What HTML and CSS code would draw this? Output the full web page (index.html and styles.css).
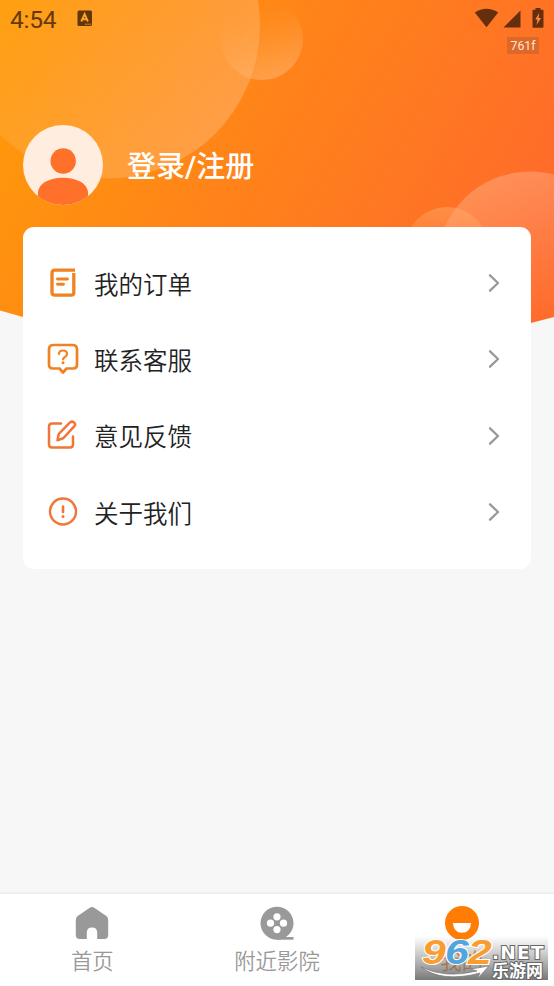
FILE: index.html
```html
<!DOCTYPE html>
<html lang="zh-CN">
<head>
<meta charset="utf-8">
<title>我的</title>
<link rel="stylesheet" href="styles.css">
</head>
<body>
<div class="app">
  <svg class="backdrop" viewBox="0 0 554 324" aria-hidden="true">
    <defs>
      <linearGradient id="sky" gradientUnits="userSpaceOnUse" x1="0" y1="30" x2="490" y2="310">
        <stop offset="0" stop-color="#ff9b08"/><stop offset=".5" stop-color="#ff821a"/><stop offset="1" stop-color="#ff6b2b"/>
      </linearGradient>
      <linearGradient id="big" x1=".1" y1=".2" x2=".85" y2=".85">
        <stop offset="0" stop-color="#fff" stop-opacity="0"/><stop offset="1" stop-color="#fff" stop-opacity=".2"/>
      </linearGradient>
      <linearGradient id="small" x1=".35" y1=".1" x2=".65" y2="1">
        <stop offset=".1" stop-color="#ffb050" stop-opacity="0"/><stop offset="1" stop-color="#ffb878" stop-opacity=".55"/>
      </linearGradient>
      <linearGradient id="low" x1=".3" y1="0" x2=".6" y2="1">
        <stop offset="0" stop-color="#fff" stop-opacity=".23"/><stop offset=".8" stop-color="#fff" stop-opacity="0"/>
      </linearGradient>
      <linearGradient id="bubble" x1=".5" y1="0" x2=".5" y2="1">
        <stop offset="0" stop-color="#ffb575" stop-opacity=".42"/><stop offset=".6" stop-color="#ffb06a" stop-opacity=".05"/>
      </linearGradient>
      <clipPath id="edge"><path d="M0 0H554V317L531 323L277 324L23 317L0 310.500Z"/></clipPath>
    </defs>
    <g clip-path="url(#edge)">
      <path fill="url(#sky)" d="M0 0H554V324H0Z"/>
      <circle cx="107" cy="25.500" r="153" fill="url(#big)"/>
      <circle cx="262" cy="39" r="41" fill="url(#small)"/>
      <circle cx="530" cy="265" r="93.500" fill="url(#low)"/>
      <circle cx="447" cy="249" r="42" fill="url(#bubble)"/>
    </g>
  </svg>

  <header class="status">
    <span class="clock">4:54</span>
    <svg class="badge" viewBox="0 0 16 17"><rect x=".5" y=".5" width="14.500" height="15.500" rx="1.500" fill="#61370a"/><path d="M4.300 11.500L7.600 4L10.900 11.500M5.400 9.200H9.800" fill="none" stroke="#ffa22c" stroke-width="1.900"/><path d="M8 14.200h1.500m.8 0h1.500m.8 0h1.300" stroke="#ffa22c" stroke-width="1"/></svg>
    <div class="signals">
      <svg width="25" height="22" viewBox="0 0 25 22"><path d="M.8 4.500Q12.500-3 24.200 4.500L12.500 19.300Z" fill="#652f0e"/></svg>
      <svg width="18" height="22" viewBox="0 0 18 22"><path d="M17.500 2.500V19.500H.5Z" fill="#652f0e"/></svg>
      <svg class="battery" width="12" height="22" viewBox="0 0 12 22"><path d="M3.500 0h5v1.700h2q1 0 1 1v16q0 1-1 1h-9q-1 0-1-1v-16q0-1 1-1h2Z" fill="#652f0e"/><path d="M7.300 5L3.200 11.500h2.300L4.500 17 9 10H6.500Z" fill="#ff8c40"/></svg>
    </div>
  </header>
  <div class="tagline"><span class="tag">761f</span></div>

  <section class="profile">
    <svg class="avatar" viewBox="0 0 80 80"><defs><clipPath id="face"><circle cx="40" cy="40" r="40"/></clipPath></defs><circle cx="40" cy="40" r="40" fill="#ffeedf"/><g clip-path="url(#face)" fill="#ff702b"><circle cx="40.200" cy="36" r="12.700"/><path d="M15 80V68C15 47.500 65 47.500 65 68V80Z"/></g></svg>
    <span class="login">登录/注册</span>
  </section>

  <main class="menu">
    <div class="row">
      <svg class="icon" viewBox="0 0 32 32"><g fill="none" stroke="#f08222" stroke-width="3.300" stroke-linecap="round"><path d="M28 3.200H8Q5 3.200 5 6.200V25.500Q5 28.200 8 28.200H24Q26.800 28.200 26.800 25.500V6" stroke-linecap="butt"/><path d="M10.500 12H20.500M10.500 17.200H16.500" stroke-width="2.900"/></g></svg>
      <span class="label">我的订单</span><svg class="arrow" viewBox="0 0 12 20"><path d="M2 2.300L10 10L2 17.700"/></svg>
    </div>
    <div class="row">
      <svg class="icon" viewBox="0 0 32 32"><g fill="none" stroke="#f08222" stroke-width="2.700" stroke-linecap="round" stroke-linejoin="round"><path d="M6.500 2H25.500Q30 2 30 6.500V21.500Q30 25.500 26 25.500H19.500L16 29.500L12.500 25.500H6Q2 25.500 2 21.500V6.500Q2 2 6.500 2Z"/><path d="M12 11Q12 7.500 16 7.500T20 11Q20 12.800 17.700 14.200Q16 15.200 16 16.300" stroke-width="2.200"/></g><circle cx="16" cy="19.800" r="1.500" fill="#f08222"/></svg>
      <span class="label">联系客服</span><svg class="arrow" viewBox="0 0 12 20"><path d="M2 2.300L10 10L2 17.700"/></svg>
    </div>
    <div class="row">
      <svg class="icon" viewBox="0 0 32 32"><g fill="none" stroke="#f07537" stroke-width="2.500" stroke-linecap="round" stroke-linejoin="round"><path d="M14 3.500H5Q2 3.500 2 6.500V24.500Q2 27.500 5 27.500H23Q26 27.500 26 24.500V16.500"/><path d="M10.500 20.300L11.700 14L23 2.400Q25 .9 27 2.400Q29 4.300 27.400 6.200L16.500 18Z"/></g></svg>
      <span class="label">意见反馈</span><svg class="arrow" viewBox="0 0 12 20"><path d="M2 2.300L10 10L2 17.700"/></svg>
    </div>
    <div class="row">
      <svg class="icon" viewBox="0 0 32 32"><circle cx="16" cy="15.500" r="13" fill="none" stroke="#f07537" stroke-width="2.400"/><path d="M16 10.500V16" stroke="#f07537" stroke-width="2.600" stroke-linecap="round"/><circle cx="16" cy="20.500" r="1.500" fill="#f07537"/></svg>
      <span class="label">关于我们</span><svg class="arrow" viewBox="0 0 12 20"><path d="M2 2.300L10 10L2 17.700"/></svg>
    </div>
  </main>

  <nav class="tabs">
    <div class="tab">
      <svg class="tabicon" viewBox="0 0 36 36"><path d="M15.800 1.700Q18 .2 20.200 1.700L32 9.800Q34.200 11.300 34.200 14V29Q34.200 33 30.200 33H23.200V26.800Q23.200 21.500 18 21.500T12.800 26.800V33H5.800Q1.800 33 1.800 29V14Q1.800 11.300 4 9.800Z" fill="#999"/></svg>
      <span>首页</span>
    </div>
    <div class="tab">
      <svg class="tabicon" viewBox="0 0 36 36"><path d="M18 31H34.500V33.700H18Z" fill="#999"/><circle cx="18" cy="17.200" r="16.500" fill="#999"/><g fill="#fff"><circle cx="18" cy="10.800" r="3.600"/><circle cx="11.500" cy="17.200" r="3.600"/><circle cx="24.500" cy="17.200" r="3.600"/><circle cx="18" cy="23.600" r="3.600"/></g></svg>
      <span>附近影院</span>
    </div>
    <div class="tab active">
      <svg class="tabicon" viewBox="0 0 36 36"><circle cx="18" cy="17" r="17" fill="#ff7d05"/><path d="M9 17H27Q26.500 26.800 18 26.800T9 17Z" fill="#fff"/></svg>
      <span>我的</span>
    </div>
  </nav>

  <svg class="watermark" viewBox="0 0 133 50">
    <defs><linearGradient id="shade" x1="0" y1="0" x2="0" y2="1"><stop offset="0" stop-color="#777" stop-opacity="0"/><stop offset="1" stop-color="#666" stop-opacity=".88"/></linearGradient></defs>
    <path d="M0 6H133V50H0Z" fill="url(#shade)"/>
    <path d="M6 37Q27 53 65 43L62 49L74 36L56 39L62 41Q31 49 6 37Z" fill="#fff" stroke="#777" stroke-width=".7"/>
    <g class="outline"><text transform="translate(7 34) scale(1.22 1)">9</text><text transform="translate(30 34) scale(1.22 1)">6</text><text transform="translate(53 34) scale(1.22 1)">2</text></g>
    <text class="net" x="77" y="28.500">.NET</text>
    <text class="site" x="77" y="46.500">乐游网</text>
  </svg>
</div>
</body>
</html>
```
FILE: styles.css
```css
* { box-sizing: border-box; }
body { margin: 0; background: #f7f7f7; font-family: Roboto, "Noto Sans CJK SC", sans-serif; }
.app { position: relative; isolation: isolate; display: flex; flex-direction: column; width: 554px; height: 986px; overflow: hidden; }
.backdrop { position: absolute; z-index: -1; top: 0; left: 0; width: 554px; height: 324px; }
.status { display: flex; align-items: center; height: 37px; padding: 0 10px 0 10px; color: #65390a; }
.clock { width: 67px; font-size: 24.500px; font-weight: 450; letter-spacing: -.2px; line-height: 37px; padding-top: 1px; }
.badge { width: 16px; height: 17px; }
.signals { display: flex; gap: 4px; margin-left: auto; padding-top: 1px; }
.battery { margin-left: 7px; }
.tagline { display: flex; justify-content: flex-end; height: 88px; padding-right: 15px; }
.tag { width: 32px; height: 17px; background: #dc692a; color: #ffe5d2; font-size: 12.300px; font-weight: 450; line-height: 18px; text-align: center; }
.profile { display: flex; align-items: center; gap: 24px; height: 80px; padding-left: 23px; }
.avatar { width: 80px; height: 80px; }
.login { padding-top: 4px; color: #fff; font-size: 29px; font-weight: 500; line-height: 40px; white-space: nowrap; }
.menu { margin: 21.500px 23px 0; height: 342px; padding: 18.500px 31px 0 24px; border-radius: 11px; background: #fff; }
.row { display: flex; align-items: center; height: 76.300px; }
.icon { width: 32px; height: 32px; margin-right: 15px; }
.label { padding-top: 5px; color: #222; font-size: 24.500px; font-weight: 350; line-height: 36px; }
.arrow { width: 12px; height: 20px; margin: 0 0 0 auto; fill: none; stroke: #999; stroke-width: 2.300; stroke-linecap: round; stroke-linejoin: round; }
.tabs { display: flex; height: 94px; margin-top: auto; border-top: 2px solid #eee; background: #fff; }
.tab { display: flex; flex: 1; flex-direction: column; align-items: center; padding-top: 12px; color: #999; font-size: 21.400px; font-weight: 350; line-height: 30px; }
.tab span { margin-top: 5px; }
.tabicon { width: 36px; height: 36px; }
.active { color: #f58220; }
.watermark { position: absolute; left: 415px; top: 930px; width: 133px; height: 50px; }
.outline { font: italic 700 35px "Liberation Sans", sans-serif; fill: #f99d30; stroke: #fff; stroke-width: 2px; paint-order: stroke; }
.outline text:nth-child(2) { fill: #50a5dc; }
.net { font: 700 18.500px "DejaVu Sans", sans-serif; letter-spacing: 1.300px; fill: #fff; stroke: #666; stroke-width: 2px; paint-order: stroke; }
.site { font: 700 17px "Noto Sans CJK SC", sans-serif; fill: #fff; stroke: #666; stroke-width: 2px; paint-order: stroke; }
```
